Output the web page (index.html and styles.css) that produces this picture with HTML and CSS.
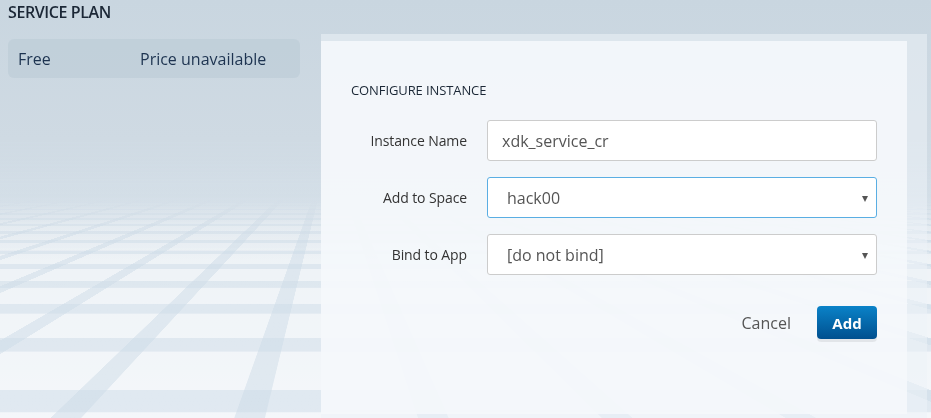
FILE: index.html
```html
<!DOCTYPE html>
<html>
<head>
<meta charset="utf-8">
<link rel="stylesheet" href="styles.css">
</head>
<body>
<div class="backdrop"><div class="floor"></div><div class="fade"></div></div>
<div class="page">
  <section class="plans">
    <h2 class="plans-title">SERVICE PLAN</h2>
    <div class="plan-row">
      <span class="plan-name">Free</span>
      <span class="plan-price">Price unavailable</span>
    </div>
  </section>
  <section class="config-outer">
    <div class="config">
      <h3 class="config-title">CONFIGURE INSTANCE</h3>
      <div class="field">
        <label class="field-label">Instance Name</label>
        <div class="control text-control">xdk_service_cr</div>
      </div>
      <div class="field">
        <label class="field-label">Add to Space</label>
        <div class="control select-control focused">hack00<span class="caret"></span></div>
      </div>
      <div class="field">
        <label class="field-label">Bind to App</label>
        <div class="control select-control">[do not bind]<span class="caret"></span></div>
      </div>
      <div class="actions">
        <span class="cancel">Cancel</span>
        <span class="add-btn">Add</span>
      </div>
    </div>
  </section>
</div>
</body>
</html>
```
FILE: styles.css
```css
html, body {
  margin: 0;
  height: 100%;
}
body {
  font-family: "Open Sans", "Noto Sans", sans-serif;
  background: linear-gradient(to bottom, #c9d6e0 0px, #d3dee7 170px, #e1e9f0 300px, #e8eef5 418px);
  overflow: hidden;
  color: #1e2b3c;
}
.backdrop {
  position: fixed;
  inset: 0;
  overflow: hidden;
  z-index: 0;
}
.floor {
  position: absolute;
  left: calc(330px - 4000px);
  width: 8000px;
  top: calc(430px - 3000px);
  height: 3000px;
  transform-origin: 50% 100%;
  transform: perspective(528px) rotateX(62deg);
  background-color: rgba(255,255,255,0.5);
  background-image:
    linear-gradient(to right, rgba(205,219,231,0.5) 0 32px, rgba(0,0,0,0) 32px 100%),
    linear-gradient(to bottom, rgba(205,219,231,0.5) 0 60px, rgba(0,0,0,0) 60px 100%);
  background-size: 192px 192px;
  background-position: 60px 0, 0 20px;
  -webkit-mask-image: linear-gradient(to bottom, transparent 0, transparent 10%, #000 50%);
  mask-image: linear-gradient(to bottom, transparent 0, transparent 10%, #000 50%);
}
.fade {
  position: absolute;
  left: 0; right: 0; top: 0;
  height: 260px;
  background: linear-gradient(to bottom, #c9d6e0 0, #cfdae3 140px, rgba(210,221,230,0.6) 185px, rgba(216,226,235,0) 260px);
}
.page {
  position: relative;
  z-index: 1;
  display: flex;
  padding: 0 4px 0 8px;
  height: 100%;
  box-sizing: border-box;
}
.plans {
  width: 292px;
  flex: none;
}
.plans-title {
  margin: 0;
  padding-top: 2px;
  font-size: 16px;
  line-height: 20px;
  font-weight: 600;
  color: #1b2736;
  letter-spacing: -0.4px;
}
.plan-row {
  margin-top: 17px;
  height: 39px;
  border-radius: 6px;
  background: rgba(186,202,214,0.55);
  display: flex;
  align-items: center;
  padding-left: 10px;
  font-size: 16px;
  color: #1d3350;
}
.plan-name {
  width: 122px;
}
.config-outer {
  margin-left: 21px;
  margin-top: 34px;
  width: 606px;
  flex: none;
  padding: 7px 20px 4px 0;
  box-sizing: border-box;
  background: rgba(236,242,247,0.55);
  height: 384px;
}
.config {
  background: rgba(245,248,251,0.88);
  height: 100%;
  box-sizing: border-box;
  padding: 41px 30px 0 30px;
}
.config-title {
  margin: 0 0 22px;
  font-size: 13px;
  line-height: 16px;
  font-weight: 400;
  color: #1b2736;
  letter-spacing: -0.1px;
}
.field {
  display: flex;
  align-items: center;
  margin-bottom: 16px;
}
.field-label {
  width: 116px;
  text-align: right;
  font-size: 14px;
  color: #333;
  margin-right: 20px;
  flex: none;
  letter-spacing: -0.1px;
}
.control {
  position: relative;
  width: 390px;
  height: 41px;
  box-sizing: border-box;
  border: 1px solid #cccccc;
  border-radius: 3px;
  background: #fff;
  font-size: 16px;
  color: #555;
  display: flex;
  align-items: center;
}
.text-control {
  padding-left: 14px;
}
.select-control {
  padding-left: 19px;
}
.select-control.focused {
  border-color: #5aaee3;
}
.caret {
  position: absolute;
  right: 8px;
  top: 18px;
  width: 0;
  height: 0;
  border-left: 3px solid transparent;
  border-right: 3px solid transparent;
  border-top: 6px solid #555;
}
.actions {
  display: flex;
  justify-content: flex-end;
  align-items: center;
  width: 526px;
  margin-top: 31px;
}
.cancel {
  font-size: 16px;
  color: #555;
  margin-right: 26px;
}
.add-btn {
  width: 60px;
  height: 33px;
  box-sizing: border-box;
  border-radius: 4px;
  background: linear-gradient(to bottom, #0a82c8, #00508f);
  color: #fff;
  font-size: 15px;
  font-weight: 700;
  display: flex;
  align-items: center;
  justify-content: center;
  box-shadow: 0 3px 0 rgba(0,0,0,0.07);
}
```
